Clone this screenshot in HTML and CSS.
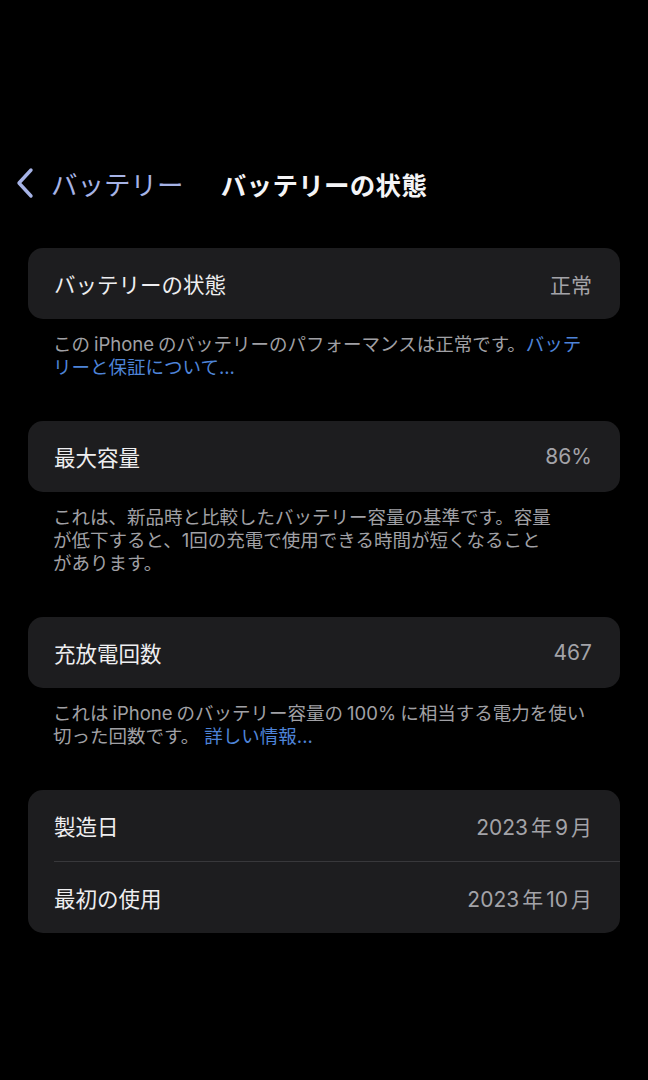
FILE: index.html
```html
<!DOCTYPE html>
<html lang="ja">
<head>
    <meta charset="UTF-8">
    <title>バッテリーの状態</title>
    <link rel="stylesheet" href="styles.css">
</head>
<body>
    <div class="screen">
        <div class="navBar">
            <a class="backBtn" href="#">
                <svg class="chevron" width="22" height="32" viewBox="0 0 22 32">
                    <path d="M17 3 L5 16 L17 29" fill="none" stroke="currentColor" stroke-width="3.4" stroke-linecap="round" stroke-linejoin="round"/>
                </svg>
                <span>バッテリー</span>
            </a>
            <div class="navTitle">バッテリーの状態</div>
            <div></div>
        </div>

        <div class="group">
            <div class="cell">
                <span class="cellLabel">バッテリーの状態</span>
                <span class="cellValue">正常</span>
            </div>
        </div>
        <div class="footer">
            <span class="line">この<span class="latin">iPhone</span>のバッテリーのパフォーマンスは正常です。<a href="#">バッテ</a></span>
            <span class="line"><a href="#">リーと保証について...</a></span>
        </div>

        <div class="group">
            <div class="cell">
                <span class="cellLabel">最大容量</span>
                <span class="cellValue">86%</span>
            </div>
        </div>
        <div class="footer">
            <span class="line">これは、新品時と比較したバッテリー容量の基準です。容量</span>
            <span class="line">が低下すると、1回の充電で使用できる時間が短くなること</span>
            <span class="line">があります。</span>
        </div>

        <div class="group">
            <div class="cell">
                <span class="cellLabel">充放電回数</span>
                <span class="cellValue">467</span>
            </div>
        </div>
        <div class="footer">
            <span class="line">これは<span class="latin">iPhone</span>のバッテリー容量の<span class="latin">100%</span>に相当する電力を使い</span>
            <span class="line">切った回数です。 <a href="#">詳しい情報...</a></span>
        </div>

        <div class="group">
            <div class="cell">
                <span class="cellLabel">製造日</span>
                <span class="cellValue"><span class="num">2023</span>年<span class="num">9</span>月</span>
            </div>
            <div class="cell">
                <span class="cellLabel">最初の使用</span>
                <span class="cellValue"><span class="num">2023</span>年<span class="num">10</span>月</span>
            </div>
        </div>
    </div>
</body>
</html>
```

FILE: styles.css
```css
body {
    margin: 0;
    background: #000;
    font-family: "Inter", "Noto Sans CJK JP", sans-serif;
    color: #ececee;
}

.screen {
    width: 648px;
    min-height: 1080px;
    display: flex;
    flex-direction: column;
    padding-top: 153px;
    box-sizing: border-box;
}

/* top navigation */
.navBar {
    height: 60px;
    display: grid;
    grid-template-columns: 1fr auto 1fr;
    align-items: center;
    margin-bottom: 35px;
}

.backBtn {
    display: flex;
    align-items: center;
    gap: 15px;
    padding-left: 14px;
    color: #a6b3e6;
    text-decoration: none;
    font-size: 26.5px;
}

.chevron {
    display: block;
}

.navTitle {
    font-size: 25.5px;
    font-weight: 700;
    color: #f4f4f6;
    letter-spacing: 0.3px;
}

/* grouped list */
.group {
    margin: 0 28px;
    background: #1d1d1f;
    border-radius: 15px;
    overflow: hidden;
}

.cell {
    height: 71px;
    display: flex;
    align-items: center;
    justify-content: space-between;
    padding: 0 28px 0 26px;
}

.cell + .cell {
    border-top: 1.5px solid #38383b;
    margin-left: 26px;
    padding-left: 0;
}

.cellLabel {
    font-size: 21.5px;
    color: #eeeef0;
}

.cellValue {
    font-size: 21px;
    color: #a3a3a8;
}

.cellValue .num {
    margin: 0 3px;
}

.cellValue .num:first-child {
    margin-left: 0;
}

.footer {
    display: flex;
    flex-direction: column;
    padding: 0 20px 0 53px;
    margin: 14px 0 42px;
    font-size: 18.5px;
    line-height: 23px;
    color: #a0a0a5;
}

.footer .line {
    white-space: nowrap;
}

.footer .latin {
    margin: 0 4px;
}

.footer a {
    color: #4e84d8;
    text-decoration: none;
}
```
